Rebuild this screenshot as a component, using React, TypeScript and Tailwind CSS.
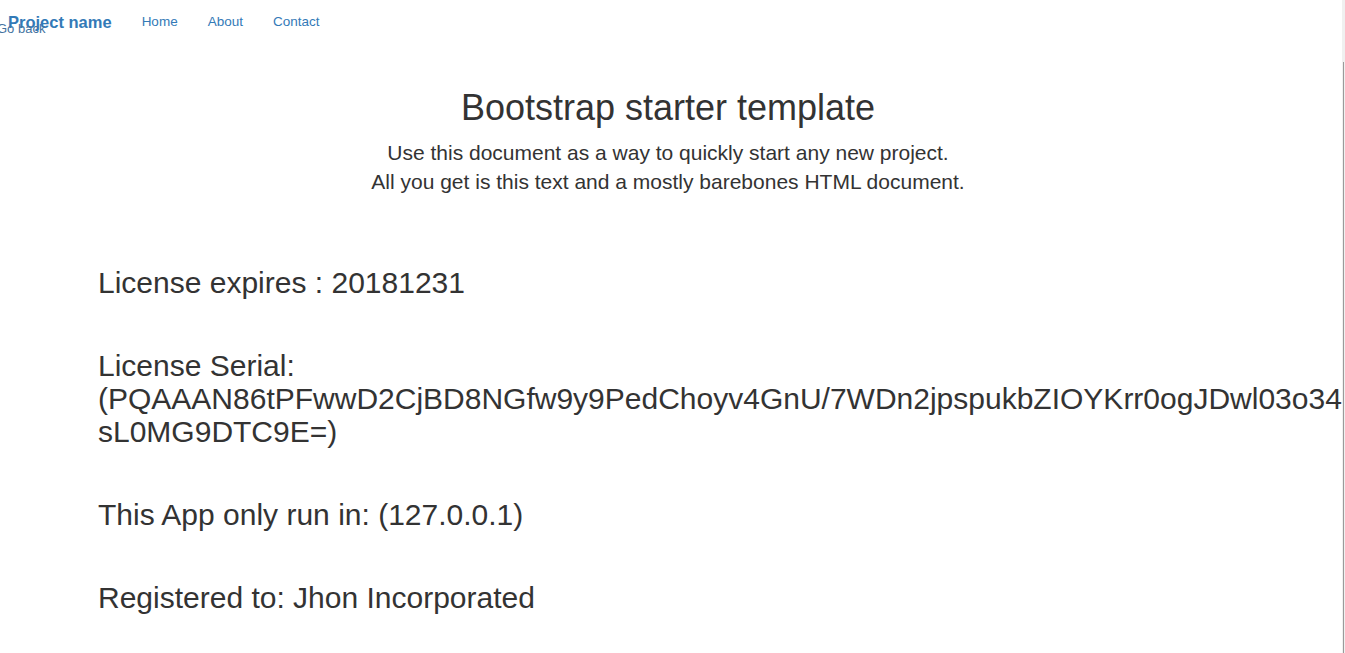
const links = ['Home', 'About', 'Contact'];

const serialHead = '(PQAAAN86tPFwwD2CjBD8NGfw9y9PedChoyv4GnU/7WDn2jpspukbZIOYKrr0ogJDwl03o34';
const serialTail = 'sL0MG9DTC9E=)';

export default function App() {
  return (
    <div className="flex h-screen overflow-hidden bg-white font-['Liberation_Sans',Arial,sans-serif] text-[#333]">
      <div className="relative min-w-0 flex-1">
        {/* navbar */}
        <nav className="flex h-[42px] items-center pt-[2px]">
          <a className="pl-[8px] pr-[15px] text-[16.5px] font-bold leading-5 text-[#337ab7]">Project name</a>
          {links.map((l) => (
            <a key={l} className="px-[15px] text-[13.5px] leading-5 text-[#337ab7]">
              {l}
            </a>
          ))}
        </nav>
        <span className="absolute left-[-3px] top-[21px] text-[13px] leading-4 text-[#44739f]">Go back</span>

        <div className="ml-[83px] w-[1170px] px-[15px]">
          <div className="pt-[46px] text-center">
            <h1 className="mb-[10px] text-[36px] leading-[1.1]">Bootstrap starter template</h1>
            <p className="text-[21px] leading-[1.4]">
              Use this document as a way to quickly start any new project.
              <br />
              All you get is this text and a mostly barebones HTML document.
            </p>
          </div>

          <div className="mt-[70px] flex flex-col gap-[50px] text-[30px] leading-[1.1]">
            <h2>License expires : 20181231</h2>
            <h2 className="whitespace-nowrap">
              License Serial:
              <br />
              {serialHead}
              <br />
              {serialTail}
            </h2>
            <h2>This App only run in: (127.0.0.1)</h2>
            <h2>Registered to: Jhon Incorporated</h2>
          </div>
        </div>
      </div>
      {/* scrollbar edge */}
      <div className="relative w-[3px] shrink-0 bg-[#f0f0f0]">
        <div className="absolute bottom-0 left-[1px] top-[62px] w-px bg-[#9a9a9a]" />
      </div>
    </div>
  );
}
